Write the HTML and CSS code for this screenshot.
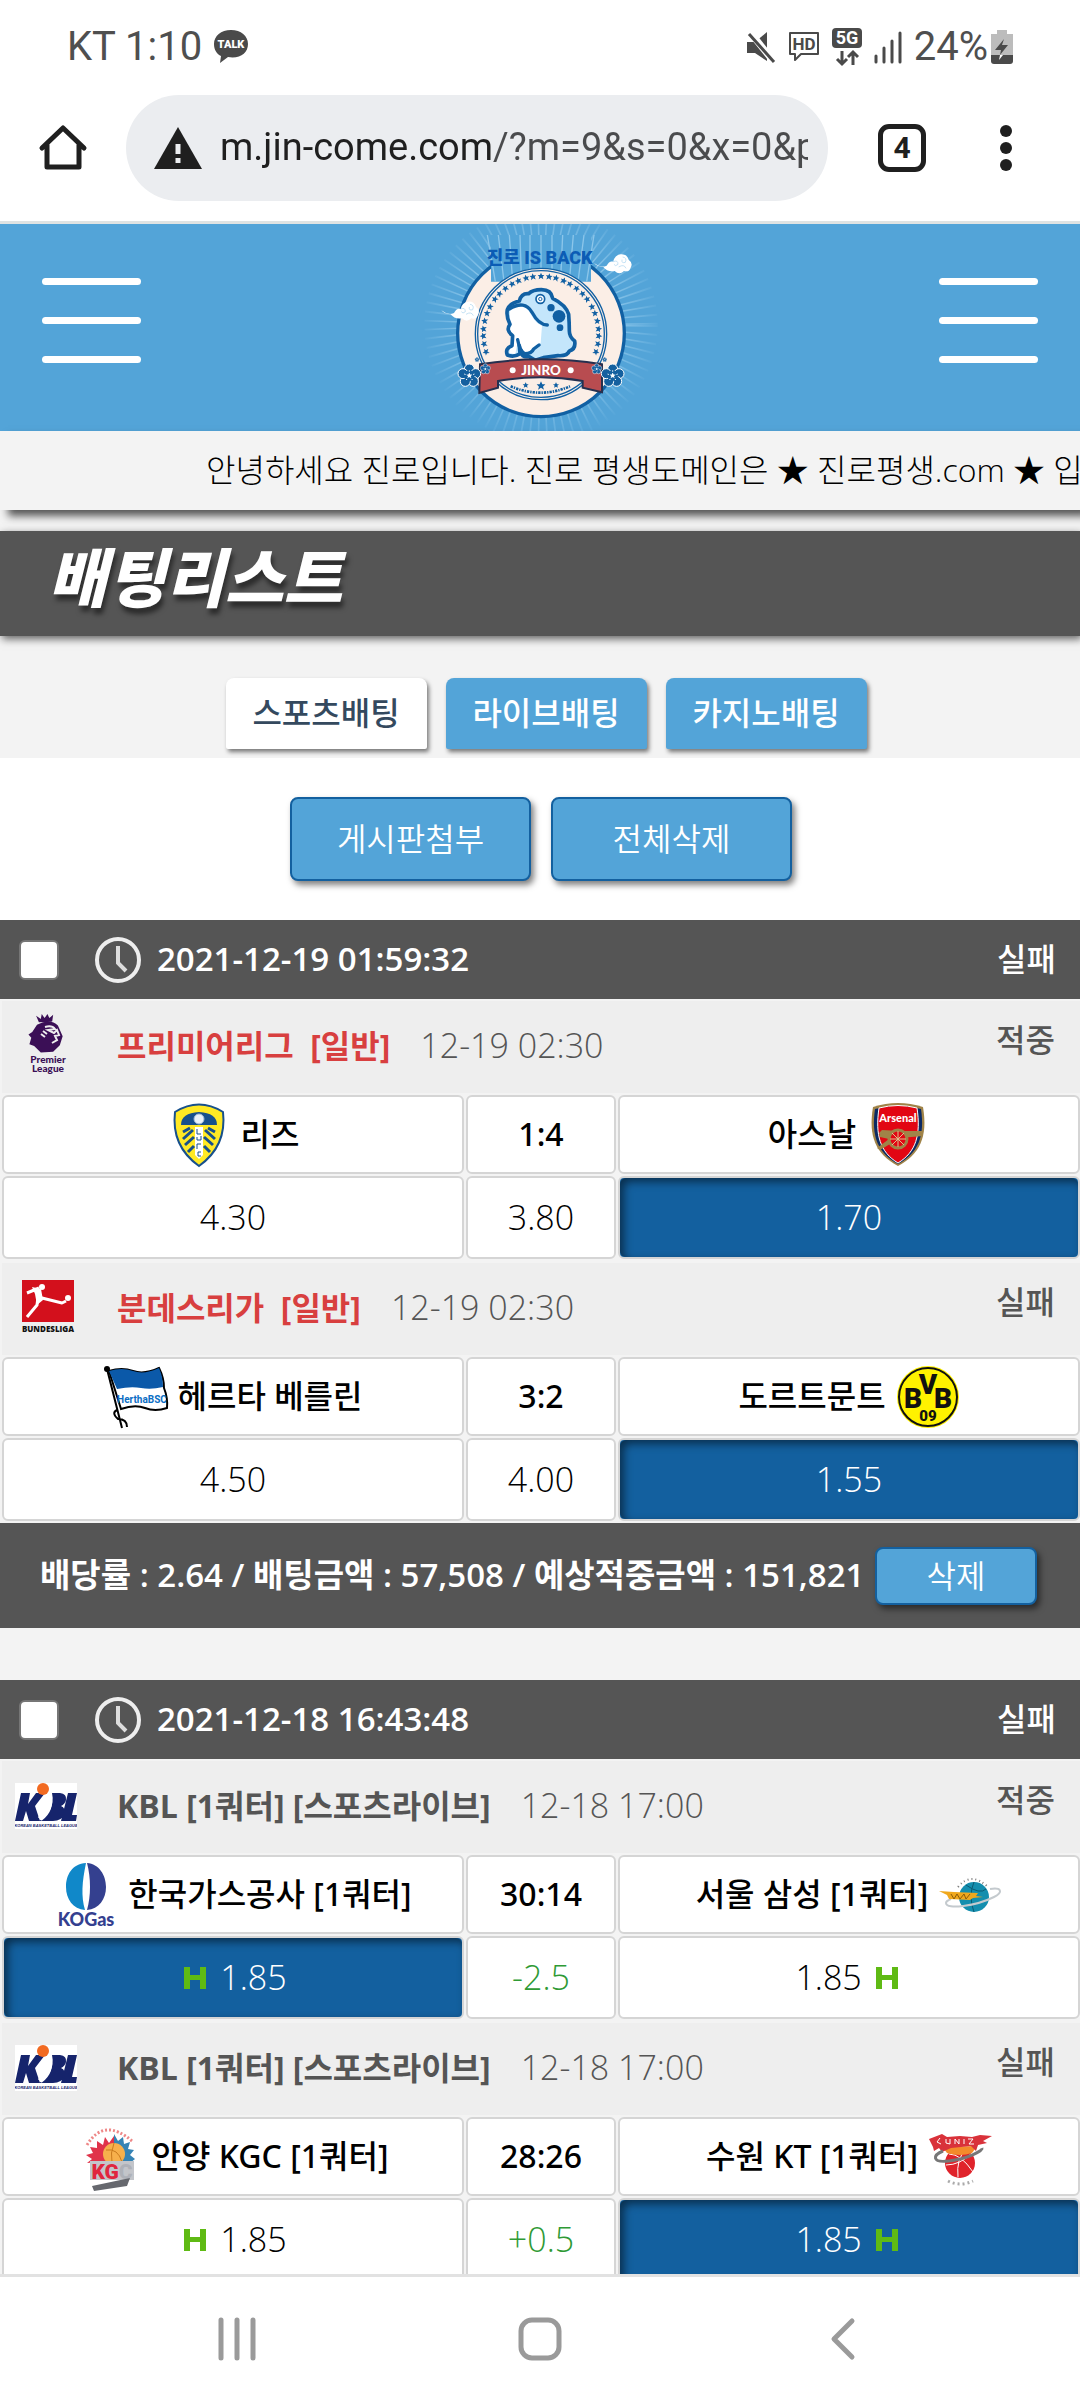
FILE: index.html
```html
<!DOCTYPE html>
<html lang="ko">
<head>
  <meta charset="UTF-8">
  <meta name="viewport" content="width=device-width">
  <title>배팅리스트</title>
  <link rel="stylesheet" href="styles.css">
</head>
<body>
  <!-- shared shapes -->
  <svg class="defs" aria-hidden="true">
    <symbol id="clock" viewBox="0 0 48 48">
      <circle cx="24" cy="24" r="21" fill="none" stroke="#eee" stroke-width="4"/>
      <path d="M24 10v17l8 8" fill="none" stroke="#ddd" stroke-width="4"/>
    </symbol>
    <symbol id="handi" viewBox="0 0 24 24">
      <path d="M1 1h6v8h10V1h6v22h-6v-9H7v9H1z" fill="#5fba14"/>
    </symbol>
    <symbol id="kbl" viewBox="0 0 62 46">
      <path fill="#fff" d="M0 0h62v46H0z"/>
      <path fill="#16246c" d="M6 10h9l-2 11 8-11h9L20 23l5 15H14l-3-10-3 10H0zM37 10h8q7 1 6 7-1 4-5 6 5 2 3 8-2 7-11 7H24c9-5 16-15 13-28zM53 10h9l-5 22h5l-1 6H46z"/>
      <path d="M35 11c3 11-1 20-9 26M31 17c-2 8-5 14-7 18" fill="none" stroke="#fff" stroke-width="2"/>
      <circle cx="28" cy="6" r="6" fill="#f26a21"/>
      <text x="31" y="44" text-anchor="middle" font-family="Liberation Sans" font-size="4" font-weight="700" font-style="italic" fill="#16246c">KOREAN BASKETBALL LEAGUE</text>
    </symbol>
  </svg>

  <div class="status">
    <span>KT 1:10</span>
    <svg class="talk" viewBox="0 0 36 36">
      <path d="M18 1C8 1 1 7 1 15c0 6 3 10 7 12l-1 7 8-6c12 2 20-4 20-13C35 7 28 1 18 1z" fill="#4a4a4a"/>
      <text x="18" y="19" text-anchor="middle" font-family="Roboto" font-size="11" font-weight="900" fill="#fff">TALK</text>
    </svg>
    <span class="grow"></span>
    <svg class="st" viewBox="0 0 30 32"><path d="M1 11h8L21 1v29L9 22H1z" fill="#4a4a4a"/><path d="M4 1l24 30" stroke="#fff" stroke-width="7"/><path d="M3 3l25 28" stroke="#4a4a4a" stroke-width="3"/></svg>
    <svg class="st hd" viewBox="0 0 34 32">
      <path d="M3 2h28v21H14l-6 6v-6H3z" fill="none" stroke="#4a4a4a" stroke-width="2" stroke-linejoin="round"/>
      <text x="17" y="19" text-anchor="middle" font-family="Roboto" font-size="17" font-weight="700" fill="#4a4a4a">HD</text>
    </svg>
    <svg class="st net" viewBox="0 0 30 38">
      <rect width="30" height="20" rx="4" fill="#4a4a4a"/>
      <text x="15" y="16" text-anchor="middle" font-family="Roboto" font-size="18" font-weight="700" fill="#fff">5G</text>
      <path d="M10 23v12M5 31l5 5 5-5M21 37V25M16 29l5-5 5 5" fill="none" stroke="#4a4a4a" stroke-width="3"/>
    </svg>
    <svg class="st" viewBox="0 0 30 32"><path d="M3 31v-6M11 31V17M19 31V10M27 31V2" stroke="#4a4a4a" stroke-width="3" stroke-linecap="round"/></svg>
    <span>24%</span>
    <svg class="battery" viewBox="0 0 22 34"><path d="M6 0h10v4h6v22H0V4h6z" fill="#bcbcbc"/><path d="M0 25h22v6q0 3-3 3H3q-3 0-3-3z" fill="#4a4a4a"/><path d="M13 9L4 20h6l-1 5 8-10h-6z" fill="#4a4a4a"/><path d="M9 25h3l-4 5z" fill="#fff"/></svg>
  </div>

  <div class="browser">
    <button class="icon-btn" aria-label="Home">
      <svg width="50" height="50" viewBox="0 0 50 50"><path d="M4 25L25 5l21 20M9 22v22h32V22" fill="none" stroke="#1f1f1f" stroke-width="5" stroke-linejoin="round" stroke-linecap="round"/></svg>
    </button>
    <label class="omnibox">
      <svg width="48" height="42" viewBox="0 0 48 42"><path d="M24 0l24 42H0z" fill="#1f1f1f"/><path d="M24 17v10M24 31v5" stroke="#ebedf0" stroke-width="5"/></svg>
      <input class="url" type="text" aria-label="URL" value="m.jin-come.com/?m=9&amp;s=0&amp;x=0&amp;p=1">
    </label>
    <button class="tab-count">4</button>
    <button class="icon-btn" aria-label="Menu">
      <svg width="12" height="46" viewBox="0 0 12 46"><g fill="#1f1f1f"><circle cx="6" cy="6" r="6"/><circle cx="6" cy="23" r="6"/><circle cx="6" cy="40" r="6"/></g></svg>
    </button>
  </div>

  <main>
    <header>
      <button class="burger" aria-label="메뉴"><i></i><i></i><i></i></button>
      <svg class="logo" viewBox="0 27 840 621">
        <defs>
          <radialGradient id="fade" gradientUnits="userSpaceOnUse" cx="423" cy="320" r="365">
            <stop offset=".6" stop-color="#8cc6ea"/>
            <stop offset="1" stop-color="#53a4d8"/>
          </radialGradient>
          <path id="star" d="M0-10l3 7h7l-5 5 2 8-7-5-7 5 2-8-5-5h7z" transform="translate(0 -174)"/>
          <g id="stars">
            <use href="#star" transform="rotate(-15)"/>
            <use href="#star" transform="rotate(-8)"/>
            <use href="#star"/>
            <use href="#star" transform="rotate(8)"/>
            <use href="#star" transform="rotate(15)"/>
          </g>
          <g id="flower">
            <g fill="#15609f" stroke="#fff" stroke-width="3">
              <circle cx="0" cy="-20" r="15"/><circle cx="19" cy="-6" r="15"/><circle cx="12" cy="17" r="15"/><circle cx="-12" cy="17" r="15"/><circle cx="-19" cy="-6" r="15"/>
            </g>
            <circle r="16" fill="#15609f"/>
            <path d="M0 0v-17M0 0l16-5M0 0l10 14M0 0l-10 14M0 0l-16-5" stroke="#fff" stroke-width="3" stroke-dasharray="8 4 4"/>
            <circle r="5" fill="#fff"/>
          </g>
          <g id="cloud" fill="#fff">
            <path d="M-2 30q20 16 38 8 8-16 20-12 4-20 22-22 18-2 24 16 14 10 6 24-4 14-20 10-14 14-28 0-22 4-34-12-20-2-28-12z"/>
            <path d="M56 26q14-6 14 8-8 8-12 0M84 12q14 2 8 16-12 4-10-8M72 42q16-10 22 4" fill="none" stroke="#a9d3ee" stroke-width="2"/>
          </g>
        </defs>
        <circle cx="423" cy="330" r="240" fill="none" stroke="url(#fade)" stroke-width="220" stroke-dasharray="4 15"/>
        <circle cx="423" cy="355" r="250" fill="#fbeee6" stroke="#1160a3" stroke-width="10"/>
        <path d="M273 60h300v140H273z" fill="#53a4d8"/>
        <path d="M286 200L262 60M312 200L295 60M338 200L328 60M364 190L360 60M390 190V60M423 190V60M456 190V60M482 190l6-130M508 200l12-140M534 200l18-140M560 200l22-140" stroke="#8cc6ea" stroke-width="4"/>
        <circle cx="423" cy="357" r="197" fill="#fbeee6" stroke="#1160a3" stroke-width="4"/>
        <circle cx="423" cy="357" r="190" fill="none" stroke="#1160a3" stroke-width="4"/>
        <text x="419" y="146" text-anchor="middle" font-family="Roboto, Noto Sans CJK KR" font-size="54" font-weight="900" fill="#0c5cb5">진로 IS BACK</text>
        <g transform="translate(423 357)" fill="#1160a3">
          <use href="#stars"/>
          <use href="#stars" transform="rotate(38)"/>
          <use href="#stars" transform="rotate(-38)"/>
          <use href="#stars" transform="rotate(77)"/>
          <use href="#stars" transform="rotate(-77)"/>
          <use href="#star" transform="rotate(100)"/>
          <use href="#star" transform="rotate(-100)"/>
          <use href="#star" transform="rotate(108)"/>
          <use href="#star" transform="rotate(-108)"/>
        </g>
        <!-- toad -->
        <path d="M322 284q8-20 36-26 6-24 28-22 12-12 38-12 30 0 34 26 40 20 48 48 2 26 2 50 0 18 16 30 4 24-16 30-6 16-34 14l-44 6-24 8-20-12q-24 4-22-16l8-16q-4-8-6-20l-6 44q-18 12-38 4-8-20 14-28l2-30q-22-16-8-34-12-22-8-44z" fill="#c4e6fb"/>
        <path d="M330 284q44-26 64 16 14 26 32 32l-4 52-34 36-22-6-12-40-8 44-18-4 6-44-4-30z" fill="#fff"/>
        <path d="M322 284q8-20 36-26 6-24 28-22 12-12 38-12 30 0 34 26 40 20 48 48 2 26 2 50 0 18 16 30 4 24-16 30-6 16-34 14l-44 6-24 8-20-12q-24 4-22-16M322 284q-4 22 8 44-14 18 8 34l-2 30q-22 8-14 28 20 8 38-4l-2-24" fill="none" stroke="#1160a3" stroke-width="11" stroke-linejoin="round" stroke-linecap="round"/>
        <path d="M328 282q46-28 68 10 20 38 46 38M353 374q6 34 22 42 20 0 26-14l16-12" fill="none" stroke="#1160a3" stroke-width="10" stroke-linecap="round"/>
        <circle cx="421" cy="252" r="13" fill="#fff" stroke="#1160a3" stroke-width="5"/>
        <circle cx="421" cy="252" r="5" fill="none" stroke="#1160a3" stroke-width="3"/>
        <g fill="#1160a3"><circle cx="477" cy="304" r="19"/><circle cx="453" cy="278" r="11"/><circle cx="480" cy="338" r="10"/></g>
        <!-- ribbon -->
        <path d="M240 448q184-30 366 0v84l-58-14v-20q-126-22-254 0v20l-56 16z" fill="#b84c50" stroke="#26304f" stroke-width="6"/>
        <text x="423" y="479" text-anchor="middle" font-family="Lato" font-size="40" font-weight="900" fill="#fff">JINRO</text>
        <circle cx="338" cy="466" r="9" fill="#fff"/><circle cx="512" cy="466" r="9" fill="#fff"/>
        <path d="M423 499l4 9h9l-7 7 3 9-9-6-9 6 3-9-7-7h9zM377 502l3 6h6l-5 4 2 6-6-3-6 3 2-6-5-4h6zM468 502l3 6h6l-5 4 2 6-6-3-6 3 2-6-5-4h6z" fill="#1160a3"/>
        <path d="M332 514q90 38 178 0" fill="none" stroke="#1160a3" stroke-width="8" stroke-dasharray="7 3 4 3"/>
        <use href="#flower" x="208" y="482"/><use href="#flower" x="638" y="482"/>
        <use href="#flower" transform="translate(256 462) scale(.45)"/><use href="#flower" transform="translate(590 462) scale(.45)"/>
        <use href="#flower" transform="translate(231 434) scale(.2)"/><use href="#flower" transform="translate(614 434) scale(.2)"/>
        <use href="#cloud" x="584" y="114"/><use href="#cloud" x="126" y="256"/>
      </svg>
      <button class="burger" aria-label="내 정보"><i></i><i></i><i></i></button>
    </header>

    <div class="notice">안녕하세요 진로입니다. 진로 평생도메인은 ★ 진로평생.com ★ 입니다.</div>

    <h1>배팅리스트</h1>

    <nav class="tabs">
      <a class="active" href="#sports">스포츠배팅</a>
      <a href="#live">라이브배팅</a>
      <a href="#casino">카지노배팅</a>
    </nav>

    <div class="actions">
      <button class="btn big">게시판첨부</button>
      <button class="btn big">전체삭제</button>
    </div>

    <section class="slip">
      <div class="slip-head">
        <input type="checkbox" aria-label="2021-12-19 01:59:32">
        <svg class="clock"><use href="#clock"/></svg>
        <span>2021-12-19 01:59:32</span>
        <b class="result">실패</b>
      </div>

      <table>
        <colgroup><col><col class="mid"><col></colgroup>
        <tr><th class="league" colspan="3">
          <div>
            <svg class="league-logo" viewBox="0 0 62 74">
              <path transform="translate(3 5) scale(.95 .82)" d="M22 10l-3-8 5 4 1-6 3 5 3-5 2 5 4-4-1 8zM20 13q14-8 22 1l5 13-3 11-7 8-13 1-7-8-5-2 2-8-3-4 4-3z" fill="#3b0f56"/>
              <path d="M30 18q7-2 10 2l-7 1 6 3 3-3 2 5-4 1 2 4-5 3M28 22l4 3M26 25l4 3" fill="none" stroke="#eee" stroke-width="2"/>
              <text x="33" y="54" text-anchor="middle" font-family="Lato" font-size="10" font-weight="900" fill="#3b0f56">Premier</text>
              <text x="33" y="63" text-anchor="middle" font-family="Lato" font-size="10" font-weight="900" fill="#3b0f56">League</text>
            </svg>
            <span class="name red">프리미어리그&nbsp; [일반]</span>
            <time>12-19 02:30</time>
            <b class="result">적중</b>
          </div>
        </th></tr>
        <tr class="teams">
          <td><div>
            <svg class="crest" viewBox="0 0 64 64">
              <path d="M8 9Q32-6 56 9q4 34-24 54Q4 43 8 9z" fill="#ffe924" stroke="#17508c" stroke-width="2"/>
              <path d="M14 22q0-12 18-13 18 1 18 13z" fill="#17508c"/>
              <circle cx="32" cy="16" r="5" fill="#e9f2fa" stroke="#9fb8d4"/>
              <path d="M16 29l7-4M16 36l10-9M18 42l9-8M21 49l6-6M48 29l-7-4M48 36l-10-9M46 42l-9-8M43 49l-6-6" stroke="#17508c" stroke-width="3"/>
              <path d="M28 24h8v28l-4 4-4-4z" fill="#fff"/>
              <path d="M30 26v5h4M30 34v3h4v-4M34 41h-4v5M34 49h-3v4h3" fill="none" stroke="#17508c"/>
            </svg>
            리즈</div></td>
          <td>1:4</td>
          <td><div>아스날
            <svg class="crest" viewBox="0 0 64 64">
              <path d="M7 4q25-8 50 0c5 30-3 47-25 59C10 51 2 34 7 4z" fill="#a08348"/>
              <path d="M9 6q23-7 46 0c4 28-3 44-23 55C12 50 5 34 9 6z" fill="#0b2a63"/>
              <path d="M13 5q19-5 38 0c4 27-1 44-19 55C14 49 9 32 13 5z" fill="#e20613" stroke="#fff"/>
              <text x="32" y="19" text-anchor="middle" font-family="Lato" font-size="11" font-weight="900" fill="#fff">Arsenal</text>
              <path d="M13 30l3-3 18 1h23v5L34 35 14 47l-3-2 12-9-9-2z" fill="#a08348"/>
              <circle cx="32" cy="36" r="9" fill="#e20613" stroke="#a08348" stroke-width="3"/>
              <path d="M32 28v16M24 36h16M26 30l12 12M38 30L26 42" stroke="#d9c48e"/>
            </svg></div></td>
        </tr>
        <tr class="odds">
          <td>4.30</td>
          <td>3.80</td>
          <td class="picked">1.70</td>
        </tr>
      </table>

      <table>
        <colgroup><col><col class="mid"><col></colgroup>
        <tr><th class="league" colspan="3">
          <div>
            <svg class="league-logo" viewBox="0 0 62 74">
              <path d="M7 9h52v42H7z" fill="#d3101c"/>
              <circle cx="27" cy="16" r="3" fill="#fff"/><circle cx="53" cy="27" r="3" fill="#fff"/>
              <path d="M24 17L12 22M24 18l-2 16-10 12M23 26l24 6 4-2" fill="none" stroke="#fff" stroke-width="3" stroke-linejoin="round"/>
              <path d="M17 16l9 2 2 11-6 5-2-11z" fill="#fff"/>
              <text x="33" y="61" text-anchor="middle" font-family="Open Sans" font-size="8" font-weight="800" fill="#111">BUNDESLIGA</text>
            </svg>
            <span class="name red">분데스리가&nbsp; [일반]</span>
            <time>12-19 02:30</time>
            <b class="result">실패</b>
          </div>
        </th></tr>
        <tr class="teams">
          <td><div>
            <svg class="crest" viewBox="0 0 64 64">
              <path d="M5 6q13-4 24 0t26-3q5 10 5 20 4 10 3 20-12 4-22 0t-24 1z" fill="#fff" stroke="#000" stroke-width="2"/>
              <path d="M5 6q13-4 24 0t26-3q4 9 4 19-12 3-22 1t-24 1z" fill="#0b59a9"/>
              <path d="M3 4l15 59M13 45q-6 3 1 9 9 0 9 8" fill="none" stroke="#000" stroke-width="2"/>
              <circle cx="3" cy="4" r="3"/>
              <text x="38" y="38" text-anchor="middle" font-family="Roboto" font-size="10" font-weight="700" fill="#0b6dc4">HerthaBSC</text>
            </svg>
            헤르타 베를린</div></td>
          <td>3:2</td>
          <td><div>도르트문트
            <svg class="crest" viewBox="0 0 64 64">
              <circle cx="32" cy="32" r="31" fill="#fff200"/>
              <circle cx="32" cy="32" r="29" fill="none" stroke="#111" stroke-width="2"/>
              <g font-family="Roboto" font-weight="900" text-anchor="middle" fill="#111">
                <text x="17" y="43" font-size="28">B</text><text x="32" y="29" font-size="28">V</text><text x="47" y="43" font-size="28">B</text>
                <text x="32" y="56" font-size="15">09</text>
              </g>
            </svg></div></td>
        </tr>
        <tr class="odds">
          <td>4.50</td>
          <td>4.00</td>
          <td class="picked">1.55</td>
        </tr>
      </table>

      <div class="slip-foot">
        <span>배당률 : 2.64 / 배팅금액 : 57,508 / 예상적중금액 : 151,821</span>
        <button class="btn small">삭제</button>
      </div>
    </section>

    <section class="slip">
      <div class="slip-head">
        <input type="checkbox" aria-label="2021-12-18 16:43:48">
        <svg class="clock"><use href="#clock"/></svg>
        <span>2021-12-18 16:43:48</span>
        <b class="result">실패</b>
      </div>

      <table>
        <colgroup><col><col class="mid"><col></colgroup>
        <tr><th class="league" colspan="3">
          <div>
            <svg class="league-logo kbl"><use href="#kbl"/></svg>
            <span class="name">KBL [1쿼터] [스포츠라이브]</span>
            <time>12-18 17:00</time>
            <b class="result">적중</b>
          </div>
        </th></tr>
        <tr class="teams">
          <td><div>
            <svg class="crest" viewBox="0 0 64 64">
              <path d="M32 0c-14 1-20 12-20 24s7 22 19 23c-4-14-3-28 1-47z" fill="#1088c9"/>
              <path d="M33 0c12 1 19 12 19 24S45 46 33 47c4-14 4-32 0-47z" fill="#34408f"/>
              <path d="M32 17q-4 12 0 26 4-14 0-26z" fill="#fff"/>
              <text x="32" y="63" text-anchor="middle" font-family="Lato" font-size="18" font-weight="900" fill="#34408f">KOGas</text>
            </svg>
            한국가스공사 [1쿼터]</div></td>
          <td>30:14</td>
          <td><div>서울 삼성 [1쿼터]
            <svg class="crest" viewBox="0 0 64 64">
              <circle cx="36" cy="34" r="15" fill="#148eae"/>
              <path d="M28 22q14 10 20 4M36 19q-6 14 0 30" fill="none" stroke="#0b5b73"/>
              <path d="M20 24q13-16 30 0" fill="none" stroke="#777" stroke-width="2" stroke-dasharray="1 3"/>
              <path d="M52 26c11-2 14 3 4 8-18 9-48 13-48 6q0-2 5-4" fill="none" stroke="#c4cace" stroke-width="2"/>
              <path d="M1 28l15 1 24 1-2 3 7 1-10 1-3 2-21-1-2-4z" fill="#f0a81c"/>
              <path d="M13 31l3 5 3-5 3 5 4-5 2 5 4-5" fill="none" stroke="#8a5b0b"/>
            </svg></div></td>
        </tr>
        <tr class="odds">
          <td class="picked"><svg class="handi"><use href="#handi"/></svg> 1.85</td>
          <td class="line">-2.5</td>
          <td>1.85 <svg class="handi"><use href="#handi"/></svg></td>
        </tr>
      </table>

      <table>
        <colgroup><col><col class="mid"><col></colgroup>
        <tr><th class="league" colspan="3">
          <div>
            <svg class="league-logo kbl"><use href="#kbl"/></svg>
            <span class="name">KBL [1쿼터] [스포츠라이브]</span>
            <time>12-18 17:00</time>
            <b class="result">실패</b>
          </div>
        </th></tr>
        <tr class="teams">
          <td><div>
            <svg class="crest" viewBox="0 0 64 64">
              <path d="M9 20Q26-8 54 16" fill="none" stroke="#e88" stroke-width="3" stroke-dasharray="2 2"/>
              <path d="M36 36L9 38l5-4-6-4 7-2-3-6 7 1 0-7 6 4 2-8 4 6 5-7z" fill="#e0334a"/>
              <path d="M36 36V9l4 7 5-4 1 7 6-2-2 7 6 1-4 5 5 4-5 4z" fill="#3583b5"/>
              <circle cx="36" cy="29" r="11" fill="#f7b04c"/>
              <path d="M28 25q12-2 16 12M36 18q-4 10-2 20" fill="none" stroke="#c97b1e"/>
              <path d="M12 36h44v19H12z" fill="#c3c5ca"/>
              <text x="34" y="54" text-anchor="middle" font-family="Roboto" font-size="21" font-weight="900" fill="#e0263e">KG<tspan fill="#aeb1b8">C</tspan></text>
              <path d="M14 61l38-8-3 8-33 5z" fill="#66686e"/>
            </svg>
            안양 KGC [1쿼터]</div></td>
          <td>28:26</td>
          <td><div>수원 KT [1쿼터]
            <svg class="crest" viewBox="0 0 64 64">
              <circle cx="32" cy="38" r="15" fill="#e0232b"/>
              <path d="M21 29q12 0 24 18M38 24q-10 10-8 28M18 40q14 0 26-12" fill="none" stroke="#fff"/>
              <path d="M13 20q20 3 37 0l-6 8q-12 4-25 0z" fill="#f38b2b"/>
              <path d="M1 14l13-5 5 3 13-1 12 1 8-2 12 1-9 5 4 2-9 2-2 6-5-5-20 2-9 4-3-4-5 3-1-4z" fill="#d9323a"/>
              <path d="M12 13l-3 4 4 2M18 14v4l4 1V14M27 19v-5l4 5v-5M36 14v5M40 14h5l-4 5h5" fill="none" stroke="#fff"/>
              <path d="M15 26c-10 4-12 12 6 10s34-10 33-13" fill="none" stroke="#777" stroke-width="3"/>
              <path d="M20 56q12 6 25 0" fill="none" stroke="#aaa" stroke-width="3" stroke-dasharray="2 3"/>
            </svg></div></td>
        </tr>
        <tr class="odds">
          <td><svg class="handi"><use href="#handi"/></svg> 1.85</td>
          <td class="line">+0.5</td>
          <td class="picked">1.85 <svg class="handi"><use href="#handi"/></svg></td>
        </tr>
      </table>
    </section>
  </main>

  <div class="navbar">
    <button aria-label="Recents"><svg width="38" height="44" viewBox="0 0 38 44"><path d="M3 3v38M19 3v38M35 3v38" stroke="#9a9a9a" stroke-width="5" stroke-linecap="round"/></svg></button>
    <button aria-label="Home"><svg width="44" height="44" viewBox="0 0 44 44"><rect x="3" y="3" width="38" height="38" rx="11" fill="none" stroke="#9a9a9a" stroke-width="5"/></svg></button>
    <button aria-label="Back"><svg width="26" height="44" viewBox="0 0 26 44"><path d="M22 4L4 22l18 18" fill="none" stroke="#9a9a9a" stroke-width="5" stroke-linecap="round" stroke-linejoin="round"/></svg></button>
  </div>
</body>
</html>
```
FILE: styles.css
```css
:root {
  --blue: #53a4d8;
  --deep: #13609f;
  --dark: #555;
  --bg: #f3f3f3;
}
* { box-sizing: border-box; }
body {
  margin: 0;
  height: 100vh;
  display: flex;
  flex-direction: column;
  background: #fff;
  color: #000;
  font-family: "Open Sans", "Noto Sans CJK KR", sans-serif;
  font-size: 32px;
  line-height: 1.4;
}
button, input { font: inherit; }
button { border: 0; padding: 0; background: none; cursor: pointer; }
svg { display: block; flex: none; overflow: visible; }
.defs { position: absolute; width: 0; height: 0; }

/* phone status bar */
.status {
  display: flex;
  align-items: center;
  gap: 11px;
  flex: none;
  height: 93px;
  padding: 0 67px;
  font-family: Roboto, sans-serif;
  font-size: 40px;
  color: #4f4f4f;
}
.grow { flex: 1; }
.talk { width: 36px; height: 36px; }
.st { width: 30px; height: 32px; }
.hd { width: 34px; }
.net { height: 38px; }
.battery { width: 22px; height: 34px; margin-left: -8px; }

/* browser toolbar */
.browser {
  display: flex;
  align-items: center;
  flex: none;
  height: 131px;
  padding: 0 68px 19px 38px;
  border-bottom: 3px solid #dfe3e3;
}
.omnibox {
  display: flex;
  align-items: center;
  flex: 1;
  gap: 18px;
  min-width: 0;
  height: 106px;
  margin: 0 50px 0 38px;
  padding: 0 20px 0 28px;
  border-radius: 53px;
  background: #ebedf0;
}
.url {
  flex: 1;
  min-width: 0;
  border: 0;
  padding: 0;
  font-family: Roboto, sans-serif;
  font-size: 38px;
  background: linear-gradient(90deg, #1f1f1f 274px, #4a4b4d 274px);
  -webkit-background-clip: text;
  background-clip: text;
  color: transparent;
  outline: 0;
}
.tab-count {
  width: 48px;
  height: 48px;
  margin-right: 74px;
  border: 5px solid #1f1f1f;
  border-radius: 11px;
  font: 700 30px/38px Roboto, sans-serif;
  color: #1f1f1f;
}

main {
  flex: 1;
  min-height: 0;
  overflow: hidden;
  background: var(--bg);
}
header {
  display: flex;
  justify-content: space-between;
  align-items: center;
  height: 207px;
  padding: 0 42px;
  background: var(--blue);
}
.logo { width: 280px; height: 207px; overflow: hidden; }
.burger {
  display: flex;
  flex-direction: column;
  gap: 32px;
  width: 99px;
  margin-bottom: 14px;
}
.burger i { height: 7px; border-radius: 4px; background: #fff; }

.notice {
  height: 79px;
  padding-left: 206px;
  line-height: 78px;
  font-weight: 300;
  white-space: nowrap;
  overflow: hidden;
  background: var(--bg);
  box-shadow: 8px 6px 8px rgba(0, 0, 0, .65);
}
h1 {
  margin: 21px 0 0;
  height: 105px;
  padding-left: 48px;
  font-size: 64px;
  font-weight: 900;
  font-style: italic;
  line-height: 94px;
  color: #fff;
  background: var(--dark);
  text-shadow: 2px 6px 5px rgba(0, 0, 0, .5);
  box-shadow: 2px 3px 8px rgba(0, 0, 0, .6);
}

.tabs {
  display: flex;
  justify-content: center;
  gap: 19px;
  padding: 42px 0 9px 12px;
}
.tabs a {
  width: 201px;
  height: 71px;
  line-height: 69px;
  border-radius: 8px 8px 2px 2px;
  text-align: center;
  text-decoration: none;
  font-weight: 500;
  color: #fff;
  background: var(--blue);
  box-shadow: 2px 3px 4px rgba(0, 0, 0, .5);
}
.tabs .active { color: #34495e; background: #fff; }

.actions {
  display: flex;
  justify-content: center;
  gap: 20px;
  padding: 39px 0 39px 2px;
  background: #fff;
}
.btn {
  border: 2px solid var(--deep);
  border-radius: 8px;
  color: #fff;
  background: var(--blue);
  font-weight: 350;
  box-shadow: 3px 4px 6px rgba(0, 0, 0, .5);
}
.big { width: 241px; height: 84px; }
.small { width: 162px; height: 58px; line-height: 50px; }

/* betting slips */
.slip { margin-bottom: 52px; }
.slip-head {
  display: flex;
  align-items: center;
  height: 79px;
  padding: 0 24px 0 19px;
  color: #fff;
  background: var(--dark);
}
.slip-head input {
  appearance: none;
  width: 40px;
  height: 40px;
  margin: 0 35px 0 0;
  border: 2px solid #767676;
  border-radius: 6px;
  background: #fff;
}
.clock { width: 48px; height: 48px; margin-right: 15px; }
.slip-head span { font-size: 33px; font-weight: 600; }
.result { margin-left: auto; font-weight: 500; }

table {
  width: calc(100% + 2px);
  table-layout: fixed;
  border-spacing: 2px;
}
.mid { width: 150px; }
th, td { padding: 0; }
.league { background: #eee; color: #555; text-align: left; }
.league div {
  display: flex;
  align-items: center;
  height: 92px;
  padding: 0 25px 2px 13px;
}
.league-logo { width: 62px; height: 74px; margin-right: 40px; }
.kbl { height: 46px; }
.name { font-weight: 700; margin-right: 30px; }
.red { color: #d83f3f; }
time { font-size: 34px; font-weight: 350; }
.league .result { padding-bottom: 12px; }

td {
  border: 2px solid #d5d5d5;
  border-radius: 6px;
  background: #fff;
  text-align: center;
}
.teams td {
  height: 79px;
  font-family: "Noto Sans", "Noto Sans CJK KR", sans-serif;
  font-weight: 500;
}
.teams div {
  display: flex;
  align-items: center;
  justify-content: center;
  gap: 10px;
}
.crest { width: 64px; height: 64px; }
.odds td { height: 83px; font-size: 34px; font-weight: 350; }
.odds .picked {
  color: #fff;
  background: var(--deep);
  box-shadow: inset 4px 4px 8px rgba(0, 0, 0, .5);
}
.odds .line { color: #2f9a35; }
.handi { display: inline-block; width: 24px; height: 24px; margin: 0 4px; }

.slip-foot {
  display: flex;
  align-items: center;
  justify-content: space-between;
  height: 105px;
  padding: 0 43px 0 40px;
  color: #fff;
  background: var(--dark);
  font-size: 33px;
  font-weight: 600;
  white-space: nowrap;
}
.slip-foot .btn { font-size: 32px; }

.navbar {
  display: flex;
  justify-content: space-around;
  flex: none;
  height: 126px;
  padding: 0 86px;
  border-top: 3px solid #e2e2e2;
  background: #fff;
}
.navbar button {
  flex: 1;
  display: flex;
  align-items: center;
  justify-content: center;
}
```
